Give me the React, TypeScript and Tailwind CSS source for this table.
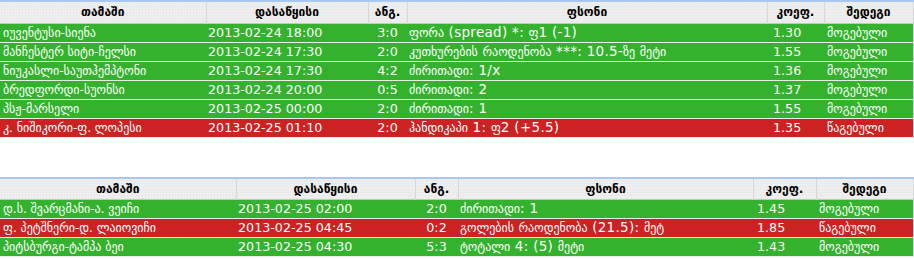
import type { ReactNode } from "react";

type Bet = {
  game: string;
  start: string;
  score: string;
  bet: string;
  coef: string;
  won: boolean;
};

const first: Bet[] = [
  { game: "იუვენტუსი-სიენა", start: "2013-02-24 18:00", score: "3:0", bet: "ფორა (spread) *: ფ1 (-1)", coef: "1.30", won: true },
  { game: "მანჩესტერ სიტი-ჩელსი", start: "2013-02-24 17:30", score: "2:0", bet: "კუთხურების რაოდენობა ***: 10.5-ზე მეტი", coef: "1.55", won: true },
  { game: "ნიუკასლი-საუთჰემპტონი", start: "2013-02-24 17:30", score: "4:2", bet: "ძირითადი: 1/x", coef: "1.36", won: true },
  { game: "ბრედფორდი-სუონსი", start: "2013-02-24 20:00", score: "0:5", bet: "ძირითადი: 2", coef: "1.37", won: true },
  { game: "პსჟ-მარსელი", start: "2013-02-25 00:00", score: "2:0", bet: "ძირითადი: 1", coef: "1.55", won: true },
  { game: "კ. ნიშიკორი-ფ. ლოპესი", start: "2013-02-25 01:10", score: "2:0", bet: "ჰანდიკაპი 1: ფ2 (+5.5)", coef: "1.35", won: false },
];

const second: Bet[] = [
  { game: "დ.ს. შვარცმანი-ა. ვეიჩი", start: "2013-02-25 02:00", score: "2:0", bet: "ძირითადი: 1", coef: "1.45", won: true },
  { game: "ფ. პეტშნერი-დ. ლაიოვიჩი", start: "2013-02-25 04:45", score: "0:2", bet: "გოლების რაოდენობა (21.5): მეტ", coef: "1.85", won: false },
  { game: "პიტსბურგი-ტამპა ბეი", start: "2013-02-25 04:30", score: "5:3", bet: "ტოტალი 4: (5) მეტი", coef: "1.43", won: true },
];

const heads = ["თამაში", "დასაწყისი", "ანგ.", "ფსონი", "კოეფ.", "შედეგი"];

// georgian glyphs render smaller than the latin/digit ones in the original
function Mixed({ text }: { text: string }) {
  return (
    <>
      {text.split(/([\u10A0-\u10FF]+)/).map((part, i) =>
        /[\u10A0-\u10FF]/.test(part) ? (
          <span key={i} className="text-[12px] leading-none">
            {part}
          </span>
        ) : (
          <span key={i} className="text-[13.5px] leading-none tracking-[0.3px]">
            {part}
          </span>
        )
      )}
    </>
  );
}

function Th({ children, w }: { children: ReactNode; w: number }) {
  return (
    <th
      style={{ width: w }}
      className="h-[22px] border-r border-[#d6d6d6] bg-[#eeeeee] bg-[radial-gradient(#e2e2e2_0.6px,transparent_0.8px)] bg-[length:3px_3px] p-0 text-center text-[12px] font-bold text-black"
    >
      {children}
    </th>
  );
}

function BetTable({ rows, widths, coefPad }: { rows: Bet[]; widths: number[]; coefPad: string }) {
  return (
    <table className="w-[913px] table-fixed border-collapse border-t-2 border-r border-t-[#a8c8ee] border-r-[#c8d4e4]">
      <thead>
        <tr className="border-b border-[#c4c4c4]">
          {heads.map((h, i) => (
            <Th key={h} w={widths[i]}>
              {h}
            </Th>
          ))}
        </tr>
      </thead>
      <tbody>
        {rows.map((r) => (
          <tr
            key={r.game}
            className={`h-[19px] border-b border-[#e6efe6] text-[12px] leading-[18px] text-white ${
              r.won ? "bg-[#34b22d]" : "bg-[#cc2222]"
            }`}
          >
            <td className="truncate p-0 pl-[3px]">{r.game}</td>
            <td className="p-0 pl-[2px] text-[12.7px]">{r.start}</td>
            <td className="p-0 text-center text-[12.7px]">{r.score}</td>
            <td className="truncate p-0 pl-[2px]">
              <Mixed text={r.bet} />
            </td>
            <td className={`p-0 text-[12.7px] ${coefPad}`}>{r.coef}</td>
            <td className="p-0 pl-[3px]">{r.won ? "მოგებული" : "წაგებული"}</td>
          </tr>
        ))}
      </tbody>
    </table>
  );
}

export default function App() {
  return (
    <div className="w-[914px] bg-white font-['DejaVu_Sans',sans-serif]">
      <BetTable rows={first} widths={[206, 162, 39, 360, 57, 89]} coefPad="pl-[6px]" />
      <div className="mt-[39px]">
        <BetTable rows={second} widths={[236, 179, 43, 295, 63, 97]} coefPad="pl-[4px]" />
      </div>
    </div>
  );
}
